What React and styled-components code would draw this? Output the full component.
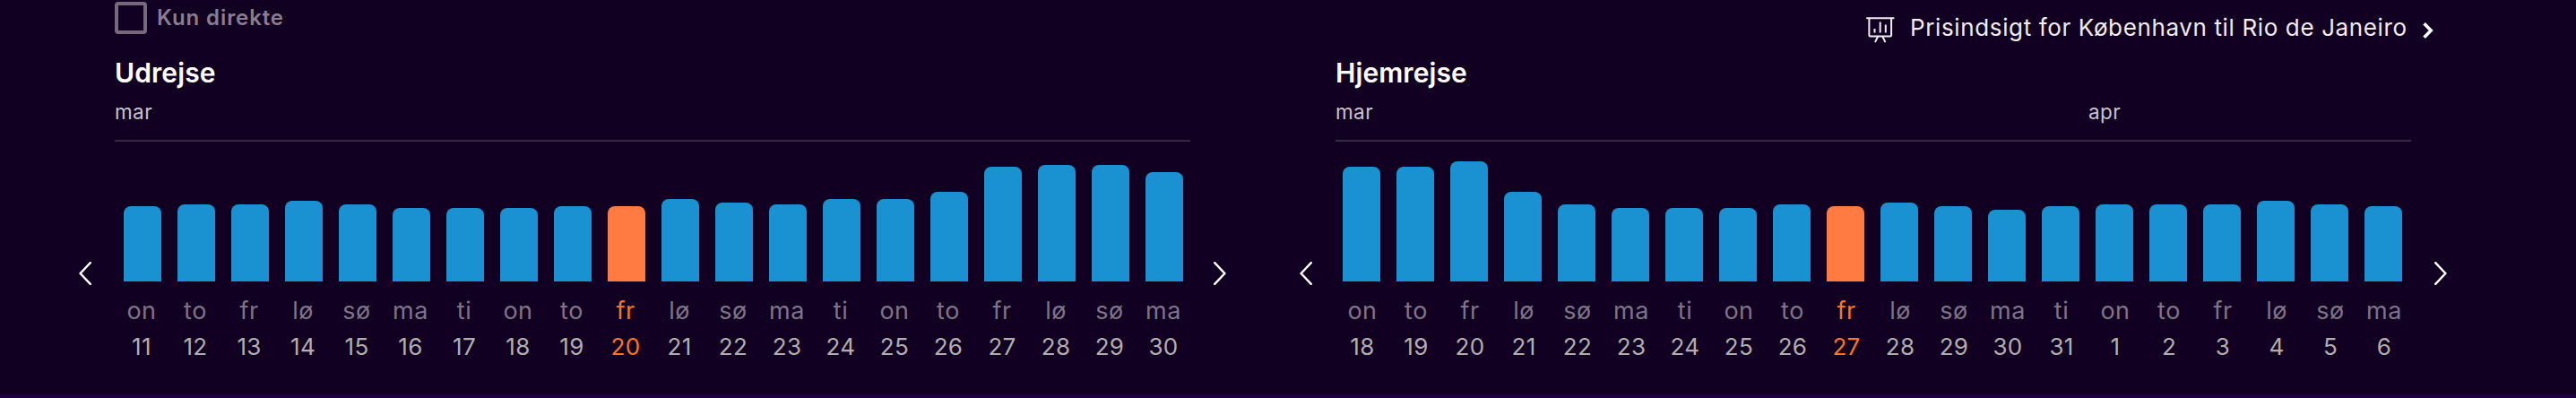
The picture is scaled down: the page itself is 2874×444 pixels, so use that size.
import React from "react";
import styled, { createGlobalStyle } from "styled-components";

const GlobalStyle = createGlobalStyle`
  *, *::before, *::after { box-sizing: border-box; }
  body {
    margin: 0;
    background: #120022;
    color: #fff;
    font-family: Inter, Lato, sans-serif;
  }
`;

const Page = styled.main`
  display: flex;
  flex-direction: column;
  width: 2874px;
  height: 444px;
  overflow: hidden;
  background: #120022;
  border-bottom: 4px solid #200040;
`;

const Toolbar = styled.header`
  display: flex;
  justify-content: space-between;
  align-items: flex-start;
  height: 60px;
  padding: 0 159px 0 128px;
`;

const CheckLabel = styled.label`
  display: flex;
  align-items: center;
  gap: 11px;
  padding-top: 2px;
`;

const CheckBox = styled.span`
  width: 36px;
  height: 36px;
  border: 4px solid #75697c;
  border-radius: 4px;
`;

const CheckText = styled.span`
  color: #887e90;
  font-size: 24px;
  font-weight: 600;
  line-height: 36px;
  letter-spacing: 0.9px;
`;

const InsightLink = styled.a`
  display: flex;
  align-items: flex-start;
  color: #f0edf0;
`;

const InsightText = styled.span`
  width: 552px;
  margin: 0 20px 0 17px;
  font-size: 26px;
  font-weight: 400;
  line-height: 61px;
  letter-spacing: 0.63px;
  white-space: nowrap;
`;

const BoardIcon = styled.svg`
  width: 32px;
  height: 30px;
  margin-top: 18px;
`;

const LinkChevron = styled.svg`
  width: 12px;
  height: 20px;
  margin-top: 24px;
`;

const Charts = styled.div`
  display: flex;
  gap: 58px;
  padding-left: 76px;
`;

const Panel = styled.section`
  width: 1304px;
`;

const Title = styled.h2`
  margin: 0 52px;
  font-size: 30px;
  font-weight: 600;
  line-height: 43px;
  letter-spacing: 0.1px;
`;

const Months = styled.div`
  display: grid;
  grid-template-columns: repeat(20, 60px);
  height: 55px;
  margin: 0 52px;
  border-bottom: 2px solid #3a2944;
`;

const Month = styled.span`
  grid-row: 1;
  grid-column: ${(p) => p.$column};
  color: #c8c3cb;
  font-size: 22.5px;
  font-weight: 400;
  line-height: 43px;
  letter-spacing: 0.4px;
`;

const Body = styled.div`
  display: flex;
  align-items: flex-start;
`;

const ArrowButton = styled.button`
  display: flex;
  justify-content: ${(p) => (p.$side === "left" ? "flex-start" : "flex-end")};
  width: 52px;
  margin: 134px 0 0;
  padding: 0 12px;
  border: 0;
  background: none;
`;

const ArrowIcon = styled.svg`
  display: block;
  width: 14px;
  height: 26px;
`;

const Days = styled.div`
  display: grid;
  grid-template-columns: repeat(20, 60px);
`;

const Day = styled.div`
  display: flex;
  flex-direction: column;
  align-items: center;
  color: ${(p) => (p.$active ? "#f97524" : "#7f7388")};
`;

const Plot = styled.div`
  display: flex;
  align-items: flex-end;
  align-self: stretch;
  height: 156px;
  padding-left: ${(p) => p.$inset}px;
`;

const Bar = styled.div`
  width: 42px;
  border-radius: 8px 8px 0 0;
  background: ${(p) => (p.$active ? "#ff7b41" : "#1a91d0")};
`;

const Weekday = styled.span`
  margin-top: 19px;
  font-size: 27px;
  font-weight: 400;
  line-height: 28px;
  letter-spacing: 0.5px;
`;

const DateNumber = styled.span`
  margin-top: 12px;
  color: ${(p) => (p.$active ? "#f97524" : "#b1aeae")};
  font-size: 26px;
  font-weight: 400;
  line-height: 28px;
  letter-spacing: 0.3px;
`;

const WEEKDAYS = ["on", "to", "fr", "lø", "sø", "ma", "ti"];

const TRIPS = [
  {
    title: "Udrejse",
    inset: 10,
    months: [{ name: "mar", column: 1 }],
    selected: 9,
    dates: [11, 12, 13, 14, 15, 16, 17, 18, 19, 20, 21, 22, 23, 24, 25, 26, 27, 28, 29, 30],
    heights: [84, 86, 86, 90, 86, 82, 82, 82, 84, 84, 92, 88, 86, 92, 92, 100, 128, 130, 130, 122],
  },
  {
    title: "Hjemrejse",
    inset: 8,
    months: [
      { name: "mar", column: 1 },
      { name: "apr", column: 15 },
    ],
    selected: 9,
    dates: [18, 19, 20, 21, 22, 23, 24, 25, 26, 27, 28, 29, 30, 31, 1, 2, 3, 4, 5, 6],
    heights: [128, 128, 134, 100, 86, 82, 82, 82, 86, 84, 88, 84, 80, 84, 86, 86, 86, 90, 86, 84],
  },
];

function Arrow({ side }) {
  return (
    <ArrowButton $side={side} aria-label={side === "left" ? "Forrige" : "Næste"}>
      <ArrowIcon viewBox="0 0 14 26" fill="none" stroke="#fff" strokeWidth="2.4" strokeLinecap="round">
        <path d={side === "left" ? "M12.8 1.2L1.6 13L12.8 24.8" : "M1.2 1.2L12.4 13L1.2 24.8"} />
      </ArrowIcon>
    </ArrowButton>
  );
}

function TripChart({ trip }) {
  return (
    <Panel>
      <Title>{trip.title}</Title>
      <Months>
        {trip.months.map((m) => (
          <Month key={m.name} $column={m.column}>{m.name}</Month>
        ))}
      </Months>
      <Body>
        <Arrow side="left" />
        <Days>
          {trip.dates.map((date, i) => {
            const active = i === trip.selected;
            return (
              <Day key={date} $active={active}>
                <Plot $inset={trip.inset}>
                  <Bar $active={active} style={{ height: trip.heights[i] }} />
                </Plot>
                <Weekday>{WEEKDAYS[i % 7]}</Weekday>
                <DateNumber $active={active}>{date}</DateNumber>
              </Day>
            );
          })}
        </Days>
        <Arrow side="right" />
      </Body>
    </Panel>
  );
}

export default function App() {
  return (
    <Page>
      <GlobalStyle />
      <Toolbar>
        <CheckLabel>
          <CheckBox />
          <CheckText>Kun direkte</CheckText>
        </CheckLabel>
        <InsightLink>
          <BoardIcon viewBox="0 0 32 30" fill="none" stroke="#f0edf0" strokeWidth="2" strokeLinecap="round">
            <path d="M1 2.2H30.6M3.4 2.2V21a1.5 1.5 0 0 0 1.5 1.5H26.6a1.5 1.5 0 0 0 1.5-1.5V2.2" />
            <path d="M9.5 14V18.5M15.7 6.5V18.5M21.8 9.5V18.5" strokeLinecap="butt" />
            <path d="M13 23L10.3 28.4M18.4 23L21.1 28.4" />
          </BoardIcon>
          <InsightText>Prisindsigt for København til Rio de Janeiro</InsightText>
          <LinkChevron viewBox="0 0 12 20" fill="none" stroke="#fff" strokeWidth="3.6">
            <path d="M1.6 2.2L9.2 10L1.6 17.8" />
          </LinkChevron>
        </InsightLink>
      </Toolbar>
      <Charts>
        {TRIPS.map((trip) => (
          <TripChart key={trip.title} trip={trip} />
        ))}
      </Charts>
    </Page>
  );
}
